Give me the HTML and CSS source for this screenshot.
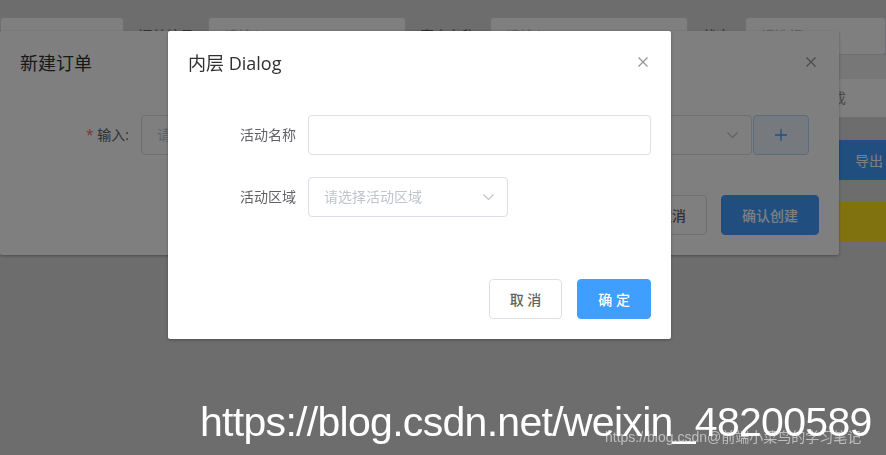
FILE: index.html
```html
<!DOCTYPE html>
<html lang="zh-CN">
<head>
  <meta charset="UTF-8">
  <title>内层 Dialog</title>
  <link rel="stylesheet" href="styles.css">
</head>
<body>
  <!-- 页面底层 -->
  <div class="page">
    <div class="filters">
      <div class="f-input first"></div>
      <label class="f-label">订单编号</label>
      <div class="f-input"><span>请输入</span></div>
      <label class="f-label">客户名称</label>
      <div class="f-input"><span>请输入</span></div>
      <label class="f-label short">状态</label>
      <div class="f-input grow"><span>请选择</span></div>
    </div>
    <div class="table-head"></div>
    <div class="table-row"><span>已完成</span></div>
    <div class="toolbar"><button class="btn-export">导出</button></div>
    <div class="notice"></div>
  </div>

  <!-- 外层 Dialog -->
  <div class="dialog outer">
    <div class="dialog-header">
      <span class="dialog-title">新建订单</span>
      <button class="dialog-close">
        <svg width="10" height="10" viewBox="0 0 10 10"><path d="M0.5 0.5L9.5 9.5M9.5 0.5L0.5 9.5" stroke="#909399" stroke-width="1.2" fill="none"/></svg>
      </button>
    </div>
    <div class="dialog-body">
      <div class="form-item last">
        <label class="form-label wide"><span class="req">*</span> 输入:</label>
        <div class="form-row">
          <div class="select long">
            <span class="ph">请选择</span>
            <svg width="11" height="6" viewBox="0 0 11 6"><path d="M0.5 0.5L5.5 5.5L10.5 0.5" stroke="#c0c4cc" stroke-width="1.2" fill="none"/></svg>
          </div>
          <button class="btn plain">
            <svg width="12" height="12" viewBox="0 0 12 12"><path d="M6 0V12M0 6H12" stroke="#409eff" stroke-width="1.3" fill="none"/></svg>
          </button>
        </div>
      </div>
    </div>
    <div class="dialog-footer">
      <button class="btn">取消</button>
      <button class="btn primary">确认创建</button>
    </div>
  </div>

  <div class="mask"></div>

  <!-- 内层 Dialog -->
  <div class="dialog inner">
    <div class="dialog-header">
      <span class="dialog-title">内层 Dialog</span>
      <button class="dialog-close">
        <svg width="10" height="10" viewBox="0 0 10 10"><path d="M0.5 0.5L9.5 9.5M9.5 0.5L0.5 9.5" stroke="#909399" stroke-width="1.2" fill="none"/></svg>
      </button>
    </div>
    <div class="dialog-body">
      <div class="form-item">
        <label class="form-label">活动名称</label>
        <div class="input"></div>
      </div>
      <div class="form-item">
        <label class="form-label">活动区域</label>
        <div class="select">
          <span class="ph">请选择活动区域</span>
          <svg width="11" height="6" viewBox="0 0 11 6"><path d="M0.5 0.5L5.5 5.5L10.5 0.5" stroke="#c0c4cc" stroke-width="1.2" fill="none"/></svg>
        </div>
      </div>
    </div>
    <div class="dialog-footer">
      <button class="btn">取 消</button>
      <button class="btn primary">确 定</button>
    </div>
  </div>

  <div class="watermark">https://blog.csdn.net/weixin_48200589</div>
  <div class="watermark-small">https://blog.csdn@前端小菜鸟的学习笔记</div>
</body>
</html>
```

FILE: styles.css
```css
body {
  margin: 0;
  height: 455px;
  overflow: hidden;
  background-color: #dadada;
  font-family: "Open Sans", "Noto Sans CJK SC", sans-serif;
  font-size: 14px;
  line-height: 20px;
}

/* 页面底层 */
.filters {
  display: flex;
  align-items: center;
  padding-top: 17px;
}

.f-input {
  flex-shrink: 0;
  width: 198px;
  height: 38px;
  box-sizing: border-box;
  padding: 0 15px;
  display: flex;
  align-items: center;
  background: #fff;
  border: 1px solid #dcdfe6;
  border-radius: 4px;
  color: #c0c4cc;
}

.f-input.first { width: 124px; }
.f-input.grow { flex: 1; }

.f-label {
  width: 84px;
  text-align: center;
  color: #606266;
}

.f-label.short { width: 57px; }

.table-head {
  height: 24px;
  background: #eeeeee;
}

.table-row {
  height: 38px;
  display: flex;
  align-items: center;
  justify-content: flex-end;
  padding-right: 40px;
  background: #fff;
  color: #909399;
}

.toolbar {
  margin-top: 23px;
  display: flex;
  justify-content: flex-end;
}

.btn-export {
  height: 40px;
  padding: 0 3px 0 30px;
  border: none;
  background: #409eff;
  color: #fff;
  font-family: inherit;
  font-size: 14px;
}

.notice {
  margin-top: 22px;
  height: 40px;
  background: #ffe51f;
}

/* 对话框 */
.dialog {
  position: absolute;
  top: 31px;
  background: #fff;
  border-radius: 2px;
  box-shadow: 0 1px 3px rgba(0, 0, 0, 0.3);
}

.dialog.outer {
  left: 0;
  width: 839px;
}

.dialog.inner {
  left: 168px;
  width: 503px;
}

.mask {
  position: fixed;
  top: 0;
  left: 0;
  right: 0;
  bottom: 0;
  background: rgba(0, 0, 0, 0.5);
}

.dialog-header {
  display: flex;
  justify-content: space-between;
  align-items: center;
  padding: 20px 20px 10px;
}

.dialog-title {
  font-size: 18px;
  line-height: 24px;
  color: #303133;
}

.dialog-close {
  width: 16px;
  height: 16px;
  padding: 0;
  border: none;
  background: none;
  display: flex;
  align-items: center;
  justify-content: center;
  margin-top: -3px;
}

.dialog-body {
  padding: 30px 20px;
}

.form-item {
  display: flex;
  margin-bottom: 22px;
}

.form-item.last { margin-bottom: 0; }

.form-label {
  width: 120px;
  box-sizing: border-box;
  padding-right: 12px;
  text-align: right;
  line-height: 40px;
  color: #606266;
}

.form-label.wide { width: 121px; }

.req {
  color: #f56c6c;
}

.input,
.select {
  height: 40px;
  box-sizing: border-box;
  border: 1px solid #dcdfe6;
  border-radius: 4px;
  background: #fff;
}

.input {
  flex: 1;
}

.select {
  width: 200px;
  display: flex;
  align-items: center;
  justify-content: space-between;
  padding: 0 13px 0 15px;
}

.select.long { width: 611px; }

.ph {
  color: #c0c4cc;
}

.form-row {
  display: flex;
  gap: 1px;
}

.dialog-footer {
  display: flex;
  justify-content: flex-end;
  gap: 15px;
  padding: 10px 20px 20px;
}

.outer .dialog-footer { gap: 14px; }

.btn {
  height: 40px;
  padding: 0 20px;
  border: 1px solid #dcdfe6;
  border-radius: 4px;
  background: #fff;
  color: #606266;
  font-family: inherit;
  font-size: 14px;
  font-weight: 500;
  display: flex;
  align-items: center;
}

.btn.primary {
  background: #409eff;
  border-color: #409eff;
  color: #fff;
}

.btn.plain {
  width: 56px;
  justify-content: center;
  background: #ecf5ff;
  border-color: #b3d8ff;
}

/* 水印 */
.watermark {
  position: absolute;
  left: 200px;
  top: 402px;
  font-family: "Liberation Sans", Arial, sans-serif;
  font-size: 41px;
  line-height: 41px;
  letter-spacing: -0.7px;
  color: #fff;
  white-space: nowrap;
}

.watermark-small {
  position: absolute;
  left: 605px;
  top: 428px;
  font-family: "Liberation Sans", "Noto Sans CJK SC", sans-serif;
  font-size: 14px;
  line-height: 18px;
  color: rgba(255, 255, 255, 0.55);
  white-space: nowrap;
}
```
